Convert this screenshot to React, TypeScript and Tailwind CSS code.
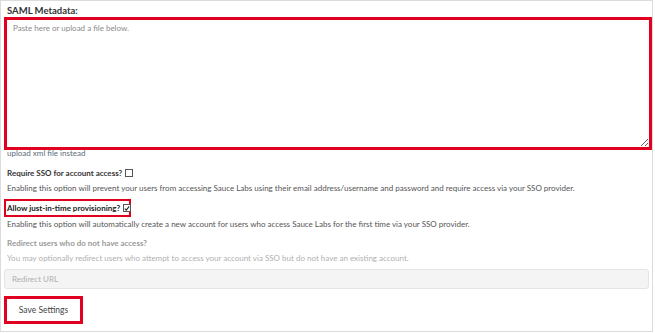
import React from 'react';

const Box = ({ checked }: { checked?: boolean }) => (
  <span className="ml-[3px] inline-flex h-[8px] w-[8px] items-center justify-center border border-[#555] bg-white">
    {checked && (
      <svg viewBox="0 0 8 8" className="h-[7px] w-[7px]">
        <path d="M1 4.2 L3 6.2 L7 1.2" fill="none" stroke="#222" strokeWidth="1.4" />
      </svg>
    )}
  </span>
);

export default function App() {
  return (
    <div className="h-[333px] w-[655px] bg-white font-['Lato',sans-serif] text-[8px]">
      <div className="h-[332px] w-[653px] border border-[#dcdcdc] px-[3px] pt-[5px]">
        <div className="pl-[3px] text-[9.5px] font-bold leading-[10px] text-[#333]">SAML Metadata:</div>
        <textarea
          className="mt-[1px] block h-[133px] w-[648px] border-[3px] border-[#e1001f] px-[6px] py-[2px] text-[8px] leading-[12px] outline-none placeholder:text-[#8a8a8a]"
          placeholder="Paste here or upload a file below."
        />
        <div className="mt-[-1px] pl-[3px] leading-[9px] text-[#5d6b78]">upload xml file instead</div>

        <div className="mt-[10px] flex items-center pl-[3px] font-bold leading-[10px] text-[#333]">
          Require SSO for account access?
          <Box />
        </div>
        <div className="mt-[5px] pl-[3px] leading-[10px] text-[#555]">
          Enabling this option will prevent your users from accessing Sauce Labs using their email address/username and password and require access via your SSO provider.
        </div>

        <div className="mt-[6px] flex w-[127px] items-center whitespace-nowrap border-[2px] border-[#e1001f] py-[2px] pl-[1px] font-bold leading-[10px] text-[#222]">
          Allow just-in-time provisioning?
          <Box checked />
        </div>
        <div className="mt-[2px] pl-[3px] leading-[10px] text-[#555]">
          Enabling this option will automatically create a new account for users who access Sauce Labs for the first time via your SSO provider.
        </div>

        <div className="mt-[9px] pl-[3px] font-bold leading-[10px] text-[#9a9a9a]">Redirect users who do not have access?</div>
        <div className="mt-[5px] pl-[3px] leading-[10px] text-[#b0b0b0]">
          You may optionally redirect users who attempt to access your account via SSO but do not have an existing account.
        </div>
        <input
          className="mt-[6px] block h-[20px] w-[645px] rounded-[3px] border border-[#e4e4e4] bg-[#f4f4f4] px-[7px] text-[8px] outline-none placeholder:text-[#b0b0b0]"
          placeholder="Redirect URL"
          disabled
        />
        <button className="mt-[7px] block h-[28px] w-[79px] border-[3px] border-[#e1001f] bg-white text-[8.5px] text-[#444]">
          Save Settings
        </button>
      </div>
    </div>
  );
}
